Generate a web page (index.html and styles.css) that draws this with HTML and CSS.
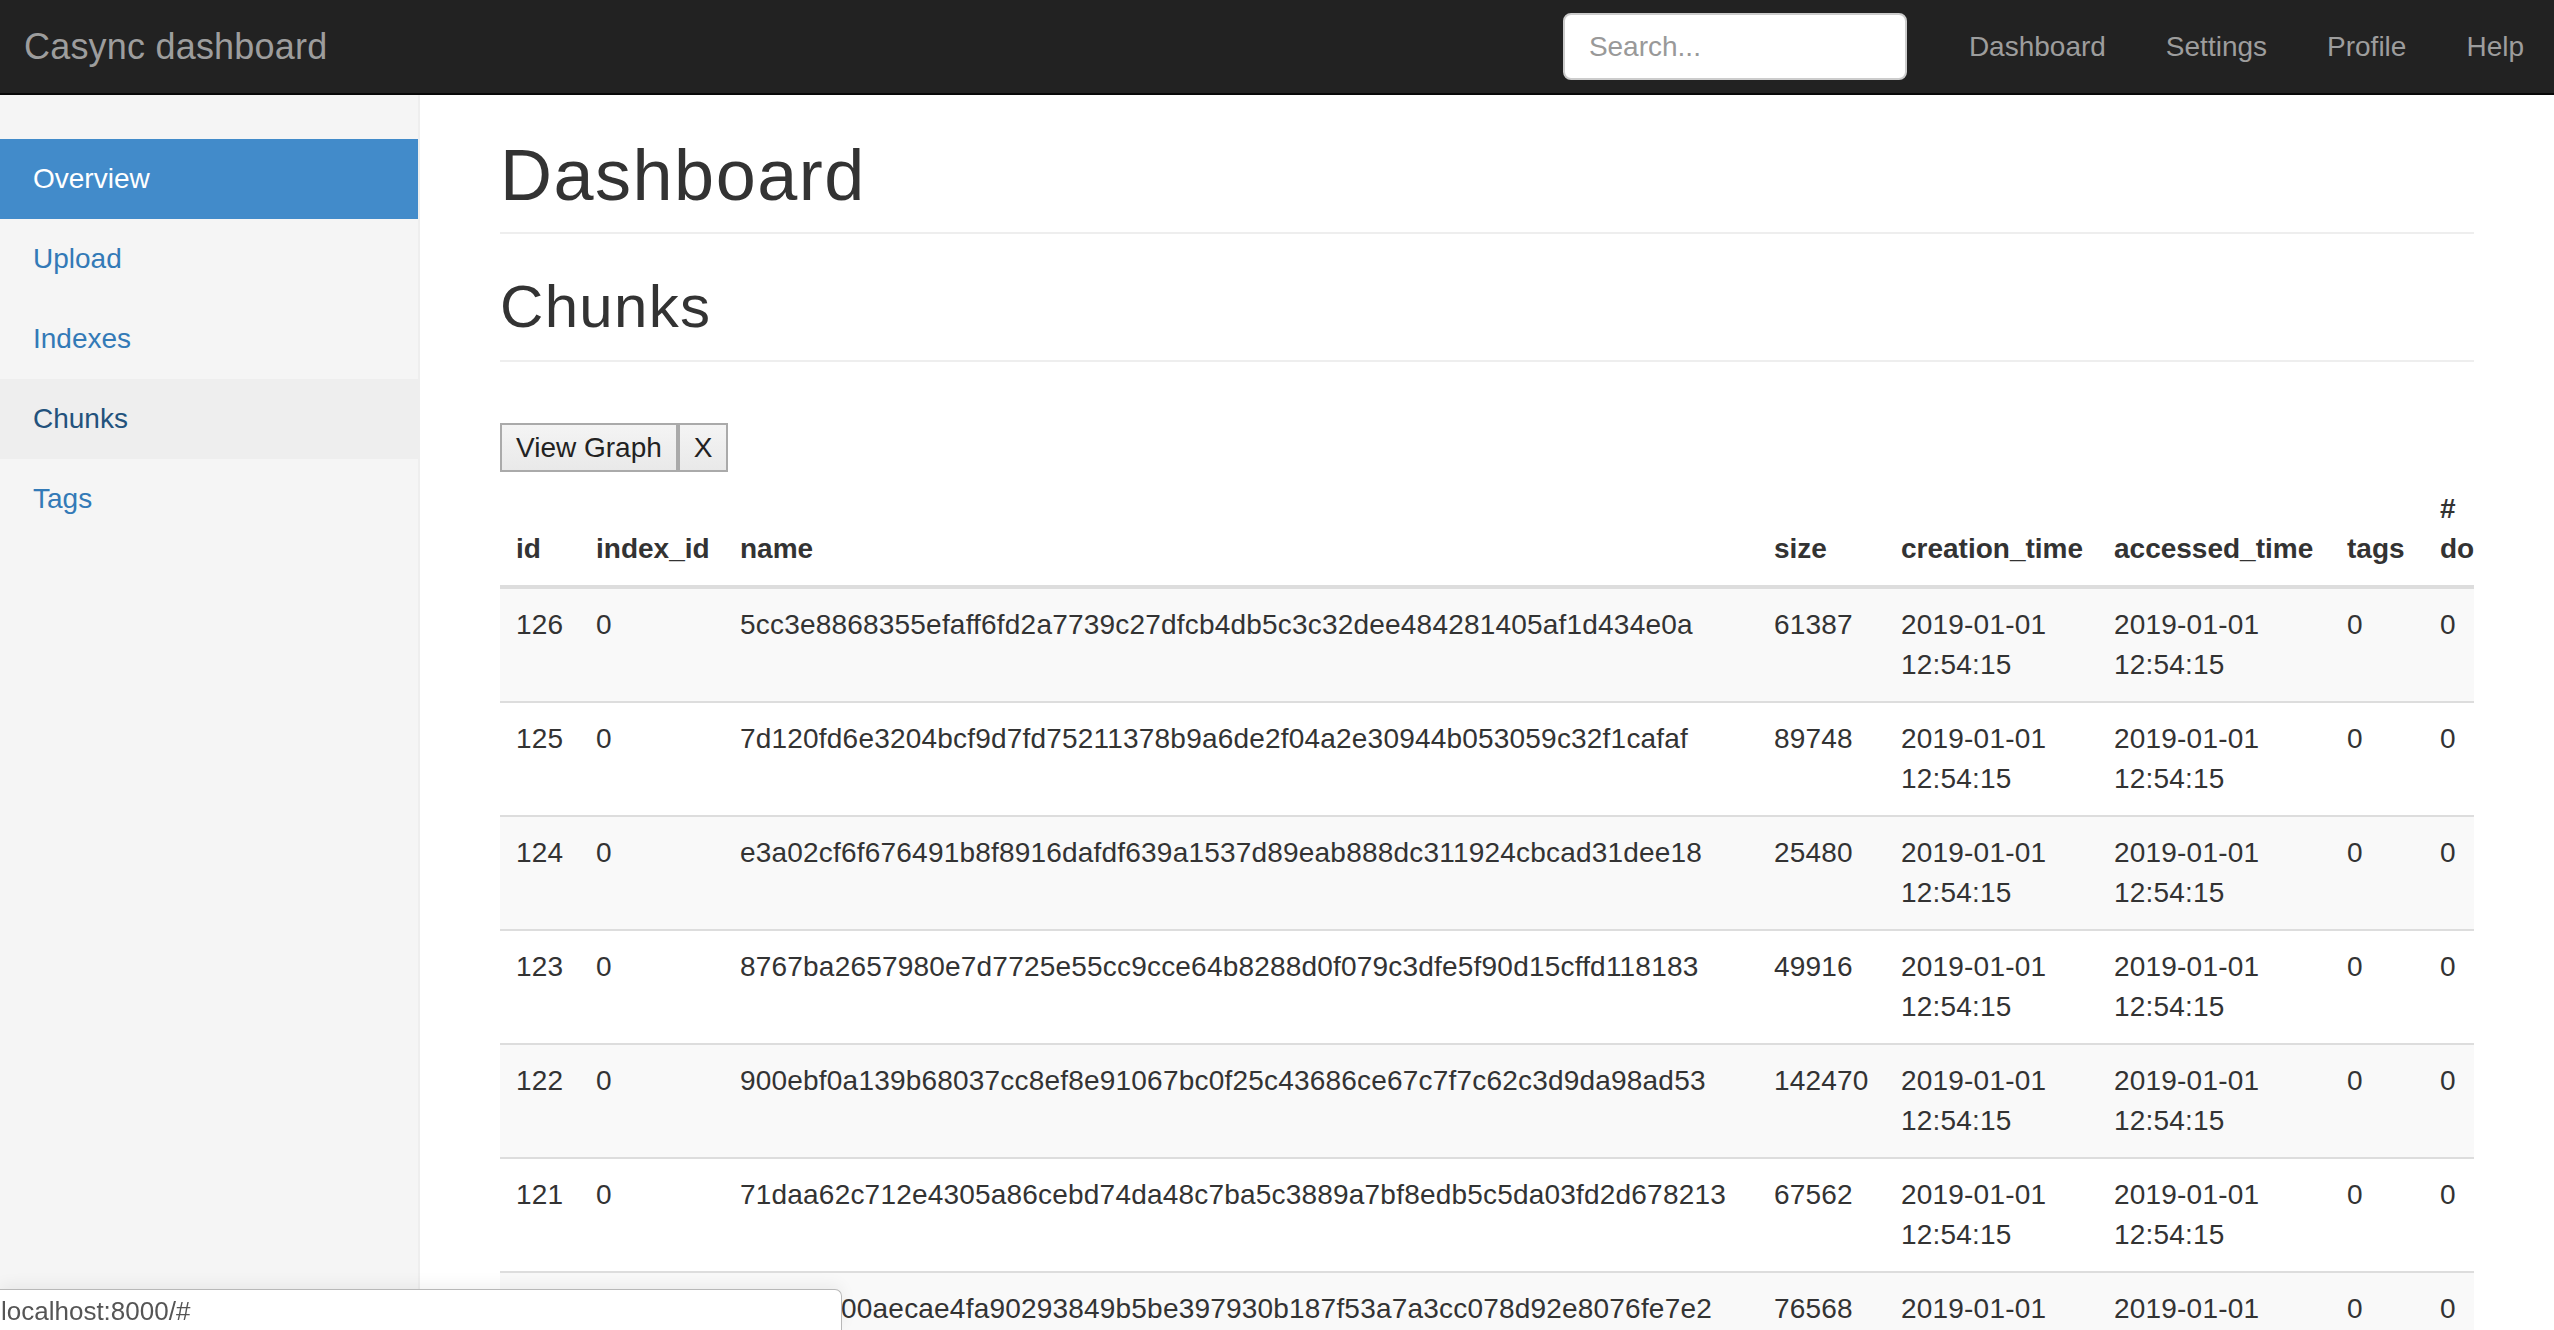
FILE: index.html
```html
<!DOCTYPE html>
<html lang="en">
<head>
<meta charset="utf-8">
<title>Casync dashboard</title>
<link rel="stylesheet" href="styles.css">
</head>
<body>
<header class="navbar">
  <div class="brand">Casync dashboard</div>
  <div class="nav-right">
    <form class="search-form"><input class="search-input" type="text" placeholder="Search..."></form>
    <ul class="nav-links">
      <li><a href="#">Dashboard</a></li>
      <li><a href="#">Settings</a></li>
      <li><a href="#">Profile</a></li>
      <li><a href="#">Help</a></li>
    </ul>
  </div>
</header>
<div class="layout">
  <aside class="sidebar">
    <ul class="side-nav">
      <li class="active"><a href="#">Overview</a></li>
      <li><a href="#">Upload</a></li>
      <li><a href="#">Indexes</a></li>
      <li class="hover"><a href="#">Chunks</a></li>
      <li><a href="#">Tags</a></li>
    </ul>
  </aside>
  <main class="main">
    <h1 class="page-header">Dashboard</h1>
    <h2 class="sub-header">Chunks</h2>
    <div class="actions"><button class="btn">View Graph</button><button class="btn">X</button></div>
    <div class="table-wrap">
      <table class="chunks">
        <colgroup>
          <col class="c-id"><col class="c-index"><col class="c-name"><col class="c-size"><col class="c-created"><col class="c-accessed"><col class="c-tags"><col class="c-docs">
        </colgroup>
        <thead>
          <tr><th>id</th><th>index_id</th><th>name</th><th>size</th><th>creation_time</th><th>accessed_time</th><th>tags</th><th># documents</th></tr>
        </thead>
        <tbody>
          <tr><td>126</td><td>0</td><td>5cc3e8868355efaff6fd2a7739c27dfcb4db5c3c32dee484281405af1d434e0a</td><td>61387</td><td>2019-01-01 12:54:15</td><td>2019-01-01 12:54:15</td><td>0</td><td>0</td></tr>
          <tr><td>125</td><td>0</td><td>7d120fd6e3204bcf9d7fd75211378b9a6de2f04a2e30944b053059c32f1cafaf</td><td>89748</td><td>2019-01-01 12:54:15</td><td>2019-01-01 12:54:15</td><td>0</td><td>0</td></tr>
          <tr><td>124</td><td>0</td><td>e3a02cf6f676491b8f8916dafdf639a1537d89eab888dc311924cbcad31dee18</td><td>25480</td><td>2019-01-01 12:54:15</td><td>2019-01-01 12:54:15</td><td>0</td><td>0</td></tr>
          <tr><td>123</td><td>0</td><td>8767ba2657980e7d7725e55cc9cce64b8288d0f079c3dfe5f90d15cffd118183</td><td>49916</td><td>2019-01-01 12:54:15</td><td>2019-01-01 12:54:15</td><td>0</td><td>0</td></tr>
          <tr><td>122</td><td>0</td><td>900ebf0a139b68037cc8ef8e91067bc0f25c43686ce67c7f7c62c3d9da98ad53</td><td>142470</td><td>2019-01-01 12:54:15</td><td>2019-01-01 12:54:15</td><td>0</td><td>0</td></tr>
          <tr><td>121</td><td>0</td><td>71daa62c712e4305a86cebd74da48c7ba5c3889a7bf8edb5c5da03fd2d678213</td><td>67562</td><td>2019-01-01 12:54:15</td><td>2019-01-01 12:54:15</td><td>0</td><td>0</td></tr>
          <tr><td>120</td><td>0</td><td>3f1b9c200aecae4fa90293849b5be397930b187f53a7a3cc078d92e8076fe7e2</td><td>76568</td><td>2019-01-01 12:54:15</td><td>2019-01-01 12:54:15</td><td>0</td><td>0</td></tr>
        </tbody>
      </table>
    </div>
  </main>
</div>
<div class="status">localhost:8000/#</div>
</body>
</html>
```
FILE: styles.css
```css
html, body {
  margin: 0;
  height: 100%;
  overflow: hidden;
}
body {
  font-family: "Liberation Sans", Arial, sans-serif;
  font-size: 28px;
  line-height: 40px;
  color: #333;
  background: #fff;
  display: flex;
  flex-direction: column;
}
.navbar {
  flex-shrink: 0;
  height: 93px;
  border-bottom: 2px solid #080808;
  background: #222;
  display: flex;
  align-items: center;
  justify-content: space-between;
}
.brand {
  font-size: 36px;
  line-height: 40px;
  color: #9d9d9d;
  padding-left: 24px;
  letter-spacing: 0.2px;
}
.nav-right {
  display: flex;
  align-items: center;
}
.search-form {
  margin: 0 32px 0 0;
}
.search-input {
  display: block;
  width: 344px;
  height: 67px;
  box-sizing: border-box;
  border: 2px solid #ccc;
  border-radius: 8px;
  padding: 0 24px;
  font-family: inherit;
  font-size: 28px;
  color: #555;
  background: #fff;
  outline: none;
}
.search-input::placeholder {
  color: #999;
}
.nav-links {
  list-style: none;
  margin: 0;
  padding: 0;
  display: flex;
}
.nav-links a {
  display: block;
  padding: 0 30px;
  line-height: 93px;
  color: #9d9d9d;
  text-decoration: none;
}
.layout {
  flex: 1;
  display: flex;
  min-height: 0;
}
.sidebar {
  width: 418px;
  flex-shrink: 0;
  background: #f5f5f5;
  border-right: 2px solid #eee;
  padding-top: 44px;
}
.side-nav {
  list-style: none;
  margin: 0;
  padding: 0;
}
.side-nav a {
  display: block;
  height: 80px;
  line-height: 80px;
  padding-left: 33px;
  color: #337ab7;
  text-decoration: none;
}
.side-nav .active a {
  background: #428bca;
  color: #fff;
}
.side-nav .hover a {
  background: #eee;
  color: #23527c;
}
.main {
  flex: 1;
  min-width: 0;
  padding: 41px 80px 0 80px;
}
.page-header {
  margin: 0 0 40px;
  font-size: 72px;
  font-weight: 500;
  line-height: 1.1;
  letter-spacing: 1.5px;
  padding-bottom: 17px;
  border-bottom: 2px solid #eee;
}
.sub-header {
  margin: 0 0 61px;
  font-size: 60px;
  font-weight: 500;
  line-height: 1.1;
  letter-spacing: 1.3px;
  padding-bottom: 20px;
  border-bottom: 2px solid #eee;
}
.actions {
  display: flex;
}
.btn {
  font-family: inherit;
  font-size: 28px;
  line-height: 40px;
  padding: 3px 14px 2px;
  border: 2px solid #aaa;
  background: linear-gradient(#f4f4f4, #e9e9e9);
  color: #222;
  margin: 0;
}
.table-wrap {
  overflow: hidden;
  padding-top: 1px;
}
.chunks {
  table-layout: fixed;
  width: 2114px;
  border-collapse: collapse;
  border-spacing: 0;
}
.c-id { width: 80px; }
.c-index { width: 144px; }
.c-name { width: 1034px; }
.c-size { width: 127px; }
.c-created { width: 213px; }
.c-accessed { width: 233px; }
.c-tags { width: 93px; }
.c-docs { width: 190px; }
.chunks th {
  text-align: left;
  vertical-align: bottom;
  font-weight: bold;
  padding: 16px;
  border-bottom: 4px solid #ddd;
}
.chunks td {
  vertical-align: top;
  padding: 16px;
  border-top: 2px solid #ddd;
  letter-spacing: 0.2px;
}
.chunks tbody tr:first-child td {
  border-top: 0;
}
.chunks tbody tr:nth-child(odd) {
  background: #f9f9f9;
}
.status {
  position: fixed;
  left: 0;
  bottom: 0;
  width: 842px;
  height: 41px;
  padding-left: 1px;
  box-sizing: border-box;
  background: #fff;
  border-top: 1px solid #b8b8b8;
  border-right: 1px solid #b8b8b8;
  border-top-right-radius: 7px;
  box-shadow: 0 -4px 16px rgba(0, 0, 0, 0.06);
  font-size: 26px;
  line-height: 42px;
  color: #555;
}
```
